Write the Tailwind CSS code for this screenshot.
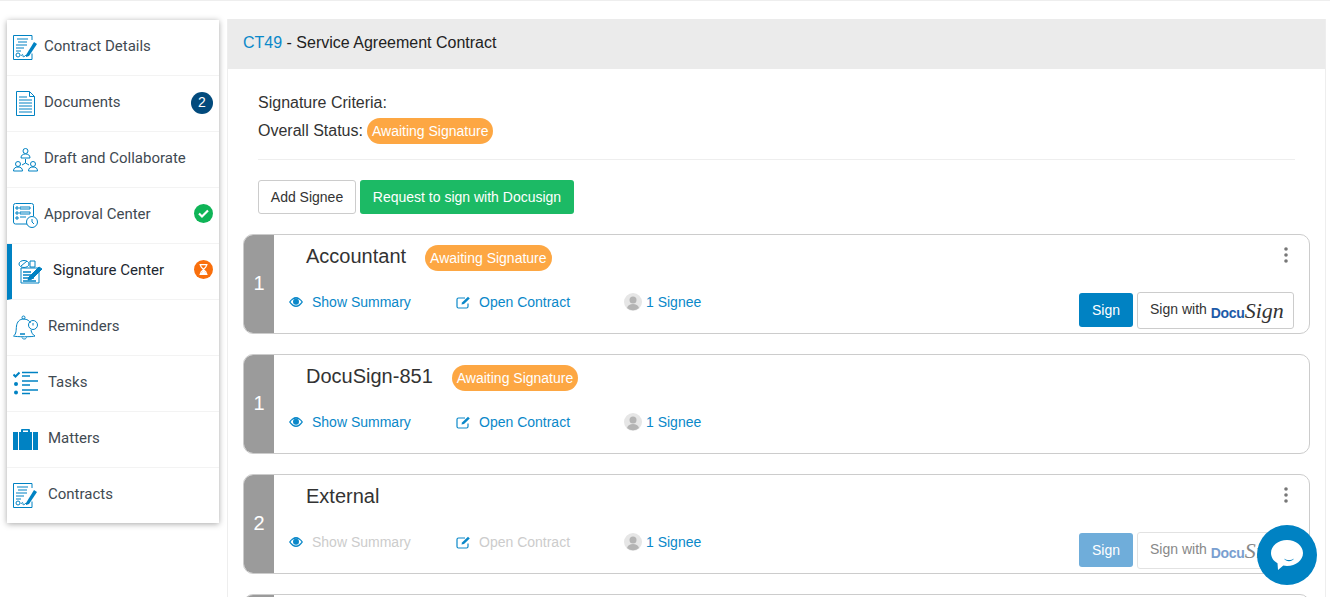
<!DOCTYPE html>
<html lang="en">
<head>
<meta charset="UTF-8" />
<title>Signature Center</title>
<script src="https://cdn.jsdelivr.net/npm/@tailwindcss/browser@4"></script>
</head>
<body class="bg-white h-[597px] w-[1330px] overflow-hidden font-['Liberation_Sans',sans-serif] text-[#333]">
  <div class="flex items-start gap-2 h-[597px] pl-[7px] border-t border-[#eee]">
    <!-- side menu -->
    <nav class="w-[212px] mt-[19px] shrink-0 bg-white shadow-[0_1px_6px_rgba(0,0,0,0.35)] font-['Roboto',sans-serif] text-[15px] text-[#3f4a52]">
      <a class="flex items-center h-14 pl-[6px] pr-[6px] border-b border-[#f3f3f3]">
        <svg class="w-[25px] h-[25px] mr-[6px]" viewBox="0 0 25 25" fill="none" stroke="#0082c3" stroke-width="1"><path d="M19 5V.5H.5v24H19v-6"/><path d="M4 4h11M5 7h9M3 10h11M3 13h8M3 16h5" stroke-width="1.200"/><path d="M13 20l8-13 3 2-8 12-3 1z" fill="#0082c3" stroke="none"/><circle cx="5" cy="20" r="2"/><path d="M8 21c1-2 2-2 2 0s2 0 3-1"/></svg>
        <span class="pb-[2px]">Contract Details</span>
      </a>
      <a class="flex items-center h-14 pl-[9px] pr-[6px] border-b border-[#f3f3f3]">
        <svg class="w-[19px] h-[25px] mr-[9px]" viewBox="0 0 19 25" fill="none" stroke="#0082c3" stroke-width="1"><path d="M.5.500h13l5 5v19H.5z"/><path d="M13.500.500v5h5"/><path d="M3 6h8M3 9h13M3 12h13M3 15h13M3 18h13M3 21h13" stroke-width="1.200"/></svg>
        <span class="pb-[2px]">Documents</span>
        <span class="ml-auto mb-[2px] w-[22px] h-[22px] rounded-full bg-[#024a7c] text-white text-[14px] font-['Liberation_Sans',sans-serif] flex items-center justify-center">2</span>
      </a>
      <a class="flex items-center h-14 pl-[6px] pr-[6px] border-b border-[#f3f3f3]">
        <svg class="w-[25px] h-[25px] mr-[6px]" viewBox="0 0 25 25" fill="none" stroke="#0082c3" stroke-width="1"><circle cx="12.500" cy="4" r="2.500"/><path d="M8 11c0-3 2-4 4.500-4s4.500 1 4.500 4z"/><circle cx="5" cy="17" r="2.500"/><path d="M.5 24c0-3 2-4 4.500-4s4.500 1 4.500 4z"/><circle cx="20" cy="17" r="2.500"/><path d="M15.500 24c0-3 2-4 4.500-4s4.500 1 4.500 4z"/><path d="M12.500 12v4M9 18l3.500-2 3.500 2"/></svg>
        <span class="pb-[2px]">Draft and Collaborate</span>
      </a>
      <a class="flex items-center h-14 pl-[6px] pr-[6px] border-b border-[#f3f3f3]">
        <svg class="w-[25px] h-[25px] mr-[6px]" viewBox="0 0 25 25" fill="none" stroke="#0082c3" stroke-width="1"><path d="M15 21H2.500a2 2 0 0 1-2-2V2.500a2 2 0 0 1 2-2h16a2 2 0 0 1 2 2V13"/><path d="M3 4h2v2H3zM7 4h10v2H7zM3 9h2v2H3zM7 9h10v2H7zM3 14h2v2H3zM7 14h6"/><circle cx="19" cy="19" r="5.500" fill="#fff"/><path d="M19 16v3l2 2"/></svg>
        <span class="pb-[2px]">Approval Center</span>
        <span class="ml-auto mb-[4px] w-[19px] h-[19px] rounded-full bg-[#0fb457] flex items-center justify-center">
          <svg class="w-[11px] h-[11px]" viewBox="0 0 11 11" fill="none" stroke="#fff" stroke-width="2.200"><path d="M1 5.500l3 3 6-6"/></svg>
        </span>
      </a>
      <a class="flex items-center h-14 pl-[6px] pr-[6px] border-b border-[#f3f3f3] border-l-[5px] border-l-[#0082c3] text-[#1d2730]">
        <svg class="w-[25px] h-[25px] mr-[10px]" viewBox="0 0 25 25" fill="none" stroke="#0082c3" stroke-width="1"><path d="M3 9h18v15H3z" fill="#fff"/><path d="M5 13h8M5 16h9M5 19h11M5 22h13" stroke-width="1.500"/><ellipse cx="6" cy="5" rx="5" ry="3.500" fill="#fff"/><path d="M3 7l6-5M12 2h5v6h-5z"/><path d="M11 18l10-10 3 2-10 10-4 1z" fill="#0082c3"/></svg>
        <span class="pb-[2px]">Signature Center</span>
        <span class="ml-auto mb-[4px] w-[19px] h-[19px] rounded-full bg-[#f96f0c] flex items-center justify-center">
          <svg class="w-[9px] h-[11px]" viewBox="0 0 9 11" fill="none" stroke="#fff" stroke-width="1.200"><path d="M.5.600h8M.5 10.400h8M1.500 1c0 3 3 3.500 3 4.500S1.500 7 1.500 10M7.500 1c0 3-3 3.500-3 4.500S7.500 7 7.500 10"/><path d="M2.500 9.500L4.500 7l2 2.500z" fill="#fff"/></svg>
        </span>
      </a>
      <a class="flex items-center h-14 pl-[6px] pr-[6px] border-b border-[#f3f3f3]">
        <svg class="w-[25px] h-[25px] mr-[10px]" viewBox="0 0 25 25" fill="none" stroke="#0082c3" stroke-width="1"><path d="M.5 21c3-2 2.500-6 3-10 .5-4 3-7 7-7s6 2 7 4M18 15c.5 3 2 5 4 6-2 1-19 1-21.500 0"/><path d="M9 22.500c.5 2 4 2 4.500 0"/><circle cx="10.500" cy="2.500" r="1.500"/><circle cx="20" cy="10" r="4.500"/><path d="M20 8v2.500"/><path d="M7 19h5" stroke-width="1.500"/></svg>
        <span class="pb-[2px]">Reminders</span>
      </a>
      <a class="flex items-center h-14 pl-[6px] pr-[6px] border-b border-[#f3f3f3]">
        <svg class="w-[25px] h-[25px] mr-[10px]" viewBox="0 0 25 25" fill="none" stroke="#0082c3"><path d="M.5 3.500l2 2 4-4" stroke-width="2"/><circle cx="3" cy="13" r="2" fill="#0082c3" stroke="none"/><circle cx="3" cy="21.500" r="2" fill="#0082c3" stroke="none"/><path d="M9 1.500h16M9 5h8M9 10h16M9 14h8M9 19h16M9 22.500h8" stroke-width="1.500"/></svg>
        <span class="pb-[2px]">Tasks</span>
      </a>
      <a class="flex items-center h-14 pl-[6px] pr-[6px] border-b border-[#f3f3f3]">
        <svg class="w-[25px] h-[21px] mr-[10px]" viewBox="0 0 25 21" fill="#0082c3"><path d="M0 3h5v18H0zM20 3h5v18h-5zM6 3h2V1a1 1 0 0 1 1-1h7a1 1 0 0 1 1 1v2h2v18H6zM10 3h5V1.500h-5z" fill-rule="evenodd"/></svg>
        <span class="pb-[2px]">Matters</span>
      </a>
      <a class="flex items-center h-[55px] pl-[6px] pr-[6px]">
        <svg class="w-[25px] h-[25px] mr-[10px]" viewBox="0 0 25 25" fill="none" stroke="#0082c3" stroke-width="1"><path d="M19 5V.5H.5v24H19v-6"/><path d="M4 4h11M5 7h9M3 10h11M3 13h8M3 16h5" stroke-width="1.200"/><path d="M13 20l8-13 3 2-8 12-3 1z" fill="#0082c3" stroke="none"/><circle cx="5" cy="20" r="2"/><path d="M8 21c1-2 2-2 2 0s2 0 3-1"/></svg>
        <span class="pb-[2px]">Contracts</span>
      </a>
    </nav>

    <!-- main panel -->
    <main class="w-[1099px] mt-[18px] shrink-0 border-x border-[#eee] h-[578px] overflow-hidden">
      <h1 class="h-[50px] bg-[#ebebeb] flex items-center pl-[15px] pb-[2px] text-[16px] font-normal text-[#222]"><span class="text-[#0a88c9]">CT49</span>&nbsp;- Service Agreement Contract</h1>
      <div class="pt-[20px] px-[15px]">
        <div class="mx-[15px] pb-[14px] border-b border-[#eee] text-[16px] text-[#333]">
          <div class="h-[28px] flex items-center">Signature Criteria:</div>
          <div class="h-[28px] flex items-center gap-[4px]">Overall Status:
            <span class="h-[26px] px-[5px] rounded-[13px] bg-[#fda743] text-white text-[14px] flex items-center">Awaiting Signature</span>
          </div>
        </div>
        <div class="mx-[15px] mt-[20px] flex gap-1 text-[14px]">
          <button class="h-[34px] w-[98px] rounded-[3px] border border-[#ccc] bg-white text-[#333]">Add Signee</button>
          <button class="h-[34px] w-[214px] rounded-[3px] bg-[#1cba65] text-white">Request to sign with Docusign</button>
        </div>

        <!-- signee cards -->
        <div class="mt-[20px] flex flex-col gap-[20px]">
          <section class="h-[100px] flex rounded-[10px] border border-[#ccc] overflow-hidden">
            <div class="w-[30px] bg-[#9b9b9b] text-white text-[20px] pb-[2px] flex items-center justify-center">1</div>
            <div class="flex-1 flex flex-col pl-[15px] pr-[15px]">
              <div class="flex items-center h-[46px] pl-[17px]">
                <span class="text-[20px] text-[#333] mb-[4px]">Accountant</span>
                <span class="ml-[19px] h-[26px] px-[5px] rounded-[13px] bg-[#fda743] text-white text-[14px] flex items-center">Awaiting Signature</span>
                <svg class="ml-auto mr-[6px] mb-[6px] w-[4px] h-[16px]" viewBox="0 0 4 16" fill="#777"><circle cx="2" cy="2" r="1.800"/><circle cx="2" cy="8" r="1.800"/><circle cx="2" cy="14" r="1.800"/></svg>
              </div>
              <div class="flex items-center h-[42px] text-[14px] text-[#0a88c9]">
                <svg class="w-[14px] h-[10px] mr-[9px]" viewBox="0 0 14 10"><path d="M0 5c2-3 4.500-5 7-5s5 2 7 5c-2 3-4.500 5-7 5S2 8 0 5z" fill="#0a88c9"/><path d="M1.500 5C3 3 5 1.800 7 1.800S11 3 12.500 5C11 7 9 8.400 7 8.400S3 7 1.500 5z" fill="#fff"/><circle cx="7" cy="4.800" r="3" fill="#0a88c9"/></svg>
                <span class="w-[144px]">Show Summary</span>
                <svg class="w-[15px] h-[13px] mr-[8px]" viewBox="0 0 15 13" fill="none" stroke="#0a88c9" stroke-width="1.200"><path d="M12 7.500V10.500a1.500 1.500 0 0 1-1.500 1.500h-8A1.500 1.500 0 0 1 1 10.500v-7A1.500 1.500 0 0 1 2.500 2H9"/><path d="M5.500 8.500l.5-2L12 .8l1.800 1.800L8 8z" fill="#0a88c9" stroke="none"/></svg>
                <span class="w-[145px]">Open Contract</span>
                <svg class="w-[18px] h-[18px] mr-[4px]" viewBox="0 0 18 18"><circle cx="9" cy="9" r="9" fill="#e6e6e6"/><circle cx="9" cy="7" r="3.500" fill="#b4b4b4"/><path d="M3 15c1-3 3-4 6-4s5 1 6 4a9 9 0 0 1-12 0z" fill="#b4b4b4"/></svg>
                <span>1 Signee</span>
                <div class="ml-auto flex gap-1 items-center relative top-[8px]">
                  <button class="w-[54px] h-[34px] rounded-[3px] bg-[#0082c3] text-white">Sign</button>
                  <button class="w-[157px] h-[37px] rounded-[3px] border border-[#ccc] bg-white text-[#333] flex items-center pl-[12px] gap-[4px]"><span class="pb-[2px]">Sign with</span> <span class="flex items-baseline"><span class="font-bold text-[#1d5ba8] text-[14px] tracking-[-0.3px]">Docu</span><span class="font-['Liberation_Serif',serif] italic text-[#333] text-[22px]">Sign</span></span></button>
                </div>
              </div>
            </div>
          </section>

          <section class="h-[100px] flex rounded-[10px] border border-[#ccc] overflow-hidden">
            <div class="w-[30px] bg-[#9b9b9b] text-white text-[20px] pb-[2px] flex items-center justify-center">1</div>
            <div class="flex-1 flex flex-col pl-[15px] pr-[15px]">
              <div class="flex items-center h-[46px] pl-[17px]">
                <span class="text-[20px] text-[#333] mb-[4px]">DocuSign-851</span>
                <span class="ml-[19px] h-[26px] px-[5px] rounded-[13px] bg-[#fda743] text-white text-[14px] flex items-center">Awaiting Signature</span>
              </div>
              <div class="flex items-center h-[42px] text-[14px] text-[#0a88c9]">
                <svg class="w-[14px] h-[10px] mr-[9px]" viewBox="0 0 14 10"><path d="M0 5c2-3 4.500-5 7-5s5 2 7 5c-2 3-4.500 5-7 5S2 8 0 5z" fill="#0a88c9"/><path d="M1.500 5C3 3 5 1.800 7 1.800S11 3 12.500 5C11 7 9 8.400 7 8.400S3 7 1.500 5z" fill="#fff"/><circle cx="7" cy="4.800" r="3" fill="#0a88c9"/></svg>
                <span class="w-[144px]">Show Summary</span>
                <svg class="w-[15px] h-[13px] mr-[8px]" viewBox="0 0 15 13" fill="none" stroke="#0a88c9" stroke-width="1.200"><path d="M12 7.500V10.500a1.500 1.500 0 0 1-1.500 1.500h-8A1.500 1.500 0 0 1 1 10.500v-7A1.500 1.500 0 0 1 2.500 2H9"/><path d="M5.500 8.500l.5-2L12 .8l1.800 1.800L8 8z" fill="#0a88c9" stroke="none"/></svg>
                <span class="w-[145px]">Open Contract</span>
                <svg class="w-[18px] h-[18px] mr-[4px]" viewBox="0 0 18 18"><circle cx="9" cy="9" r="9" fill="#e6e6e6"/><circle cx="9" cy="7" r="3.500" fill="#b4b4b4"/><path d="M3 15c1-3 3-4 6-4s5 1 6 4a9 9 0 0 1-12 0z" fill="#b4b4b4"/></svg>
                <span>1 Signee</span>
              </div>
            </div>
          </section>

          <section class="h-[100px] flex rounded-[10px] border border-[#ccc] overflow-hidden">
            <div class="w-[30px] bg-[#9b9b9b] text-white text-[20px] pb-[2px] flex items-center justify-center">2</div>
            <div class="flex-1 flex flex-col pl-[15px] pr-[15px]">
              <div class="flex items-center h-[46px] pl-[17px]">
                <span class="text-[20px] text-[#333] mb-[4px]">External</span>
                <svg class="ml-auto mr-[6px] mb-[6px] w-[4px] h-[16px]" viewBox="0 0 4 16" fill="#777"><circle cx="2" cy="2" r="1.800"/><circle cx="2" cy="8" r="1.800"/><circle cx="2" cy="14" r="1.800"/></svg>
              </div>
              <div class="flex items-center h-[42px] text-[14px] text-[#0a88c9]">
                <svg class="w-[14px] h-[10px] mr-[9px]" viewBox="0 0 14 10"><path d="M0 5c2-3 4.500-5 7-5s5 2 7 5c-2 3-4.500 5-7 5S2 8 0 5z" fill="#0a88c9"/><path d="M1.500 5C3 3 5 1.800 7 1.800S11 3 12.500 5C11 7 9 8.400 7 8.400S3 7 1.500 5z" fill="#fff"/><circle cx="7" cy="4.800" r="3" fill="#0a88c9"/></svg>
                <span class="w-[144px] text-[#ccc]">Show Summary</span>
                <svg class="w-[15px] h-[13px] mr-[8px]" viewBox="0 0 15 13" fill="none" stroke="#0a88c9" stroke-width="1.200"><path d="M12 7.500V10.500a1.500 1.500 0 0 1-1.500 1.500h-8A1.500 1.500 0 0 1 1 10.500v-7A1.500 1.500 0 0 1 2.500 2H9"/><path d="M5.500 8.500l.5-2L12 .8l1.800 1.800L8 8z" fill="#0a88c9" stroke="none"/></svg>
                <span class="w-[145px] text-[#ccc]">Open Contract</span>
                <svg class="w-[18px] h-[18px] mr-[4px]" viewBox="0 0 18 18"><circle cx="9" cy="9" r="9" fill="#e6e6e6"/><circle cx="9" cy="7" r="3.500" fill="#b4b4b4"/><path d="M3 15c1-3 3-4 6-4s5 1 6 4a9 9 0 0 1-12 0z" fill="#b4b4b4"/></svg>
                <span>1 Signee</span>
                <div class="ml-auto flex gap-1 items-center relative top-[8px]">
                  <button class="w-[54px] h-[34px] rounded-[3px] bg-[#6fadda] text-white">Sign</button>
                  <button class="w-[157px] h-[37px] rounded-[3px] border border-[#e2e2e2] bg-white text-[#888] flex items-center pl-[12px] gap-[4px]"><span class="pb-[2px]">Sign with</span> <span class="flex items-baseline"><span class="font-bold text-[#7a9fd0] text-[14px] tracking-[-0.3px]">Docu</span><span class="font-['Liberation_Serif',serif] italic text-[#888] text-[22px]">Sign</span></span></button>
                </div>
              </div>
            </div>
          </section>

          <section class="h-[100px] flex rounded-[10px] border border-[#ccc] overflow-hidden">
            <div class="w-[30px] bg-[#9b9b9b]"></div>
          </section>
        </div>
      </div>
    </main>
  </div>

  <!-- chat launcher -->
  <button class="fixed left-[1257px] top-[525px] w-[60px] h-[60px] rounded-full bg-[#0082c3] flex items-center justify-center">
    <svg class="w-[32px] h-[30px]" viewBox="0 0 32 30"><path d="M16 0c8.800 0 16 5.800 16 13s-7.200 13-16 13c-1.300 0-2.500-.1-3.700-.4L7 30l-.5-6.700C2.500 21 0 17.300 0 13 0 5.800 7.200 0 16 0z" fill="#fff"/><path d="M13 18.500c3 2 7 2 10 0-2 3.500-8 3.500-10 0z" fill="#0082c3"/></svg>
  </button>
</body>
</html>
